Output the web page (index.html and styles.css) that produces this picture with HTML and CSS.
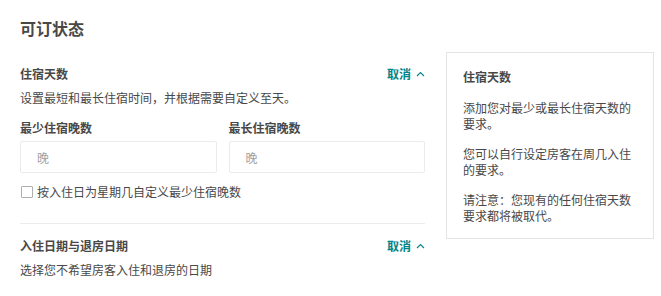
FILE: index.html
```html
<!DOCTYPE html>
<html lang="zh">
<head>
<meta charset="utf-8">
<link rel="stylesheet" href="styles.css">
</head>
<body>
<div class="page">
  <h1 class="title">可订状态</h1>
  <div class="layout">
    <div class="main">
      <section class="section">
        <div class="sec-head">
          <span class="sec-title">住宿天数</span>
          <span class="toggle">取消<svg class="chev" width="9" height="6" viewBox="0 0 9 6"><path d="M1 5 L4.5 1.5 L8 5" fill="none" stroke="#008489" stroke-width="1.1"/></svg></span>
        </div>
        <p class="desc">设置最短和最长住宿时间，并根据需要自定义至天。</p>
        <div class="fields">
          <div class="field">
            <label class="label">最少住宿晚数</label>
            <div class="input"><span class="ph">晚</span></div>
          </div>
          <div class="field">
            <label class="label">最长住宿晚数</label>
            <div class="input"><span class="ph">晚</span></div>
          </div>
        </div>
        <div class="check-row">
          <span class="box"></span>
          <span>按入住日为星期几自定义最少住宿晚数</span>
        </div>
      </section>
      <div class="divider"></div>
      <section class="section2">
        <div class="sec-head">
          <span class="sec-title">入住日期与退房日期</span>
          <span class="toggle">取消<svg class="chev" width="9" height="6" viewBox="0 0 9 6"><path d="M1 5 L4.5 1.5 L8 5" fill="none" stroke="#008489" stroke-width="1.1"/></svg></span>
        </div>
        <p class="desc">选择您不希望房客入住和退房的日期</p>
      </section>
    </div>
    <aside class="side">
      <div class="side-title">住宿天数</div>
      <p class="side-p">添加您对最少或最长住宿天数的要求。</p>
      <p class="side-p">您可以自行设定房客在周几入住的要求。</p>
      <p class="side-p">请注意：您现有的任何住宿天数要求都将被取代。</p>
    </aside>
  </div>
</div>
</body>
</html>
```
FILE: styles.css
```css
* { box-sizing: border-box; }
html, body { margin: 0; padding: 0; background: #fff; }
body {
  font-family: "Noto Sans CJK SC", "Noto Sans", sans-serif;
  color: #484848;
  font-size: 12px;
}
.page { padding: 16px 7px 0 20px; }
.title {
  margin: 0;
  font-size: 16px;
  line-height: 24px;
  font-weight: 700;
  color: #484848;
}
.layout {
  display: flex;
  gap: 21px;
  margin-top: 12px;
  align-items: flex-start;
}
.main { width: 405px; padding-top: 13px; }
.sec-head {
  display: flex;
  justify-content: space-between;
  align-items: center;
  height: 18px;
  line-height: 18px;
}
.sec-title { font-weight: 700; font-size: 12px; }
.toggle {
  display: flex;
  align-items: center;
  color: #008489;
  font-weight: 700;
  font-size: 12px;
}
.chev { margin-left: 5px; margin-top: -1px; }
.desc { margin: 6px 0 0; line-height: 18px; }
.fields { display: flex; gap: 12px; margin-top: 12px; }
.field { flex: 1; }
.label { display: block; font-weight: 700; line-height: 18px; }
.input {
  margin-top: 4px;
  height: 32px;
  border: 1px solid #ebebeb;
  border-radius: 2px;
  display: flex;
  align-items: center;
  padding-left: 16px;
}
.ph { color: #a0a0a0; }
.check-row {
  margin-top: 10px;
  display: flex;
  align-items: center;
  line-height: 18px;
  gap: 4px;
}
.box {
  width: 12px;
  height: 12px;
  border: 1px solid #b0b0b0;
  border-radius: 1px;
  margin-left: 1px;
}
.divider { height: 1px; background: #ebebeb; margin-top: 22px; }
.section2 { padding-top: 13px; }
.side {
  width: 208px;
  border: 1px solid #e4e4e4;
  padding: 15px 16px 14px 16px;
}
.side-title { font-weight: 700; line-height: 18px; }
.side-p { margin: 14px 0 0; line-height: 16px; }
```
